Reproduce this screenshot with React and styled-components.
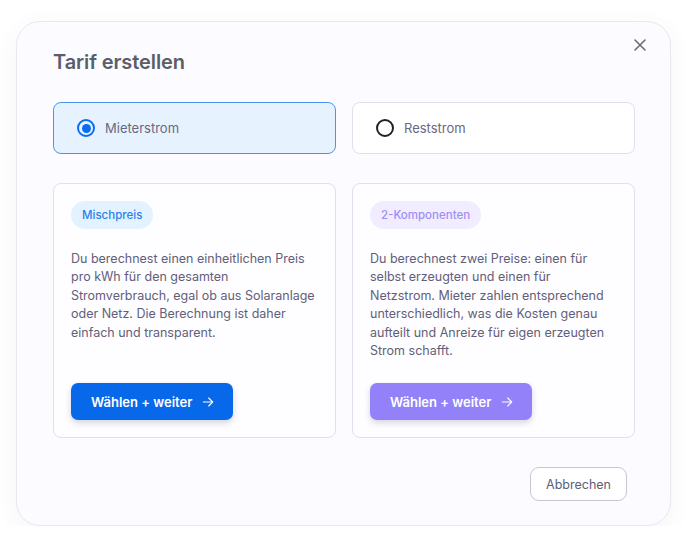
import React, { useState } from "react";
import styled, { createGlobalStyle } from "styled-components";

const Global = createGlobalStyle`
  html, body { margin: 0; padding: 0; background: #ffffff; }
  body { font-family: Inter, "Noto Sans", Arial, sans-serif; -webkit-font-smoothing: antialiased; }
  * { box-sizing: border-box; }
`;

const Page = styled.div`
  padding: 21px 16px 0 16px;
  width: 687px;
`;

const Dialog = styled.div`
  position: relative;
  width: 655px;
  height: 505px;
  background: #fcfbff;
  border: 1px solid #e9e7f0;
  border-radius: 24px;
  box-shadow: 0 6px 24px rgba(90, 80, 140, 0.06);
  padding: 28px 35px 24px 36px;
  display: flex;
  flex-direction: column;
`;

const Close = styled.button`
  position: absolute;
  top: 14px;
  right: 21px;
  width: 18px;
  height: 18px;
  border: none;
  background: transparent;
  padding: 0;
  display: flex;
  align-items: center;
  justify-content: center;
  cursor: pointer;
`;

const Title = styled.h2`
  margin: 0;
  font-size: 20px;
  line-height: 24px;
  font-weight: 600;
  color: #5a5e69;
  letter-spacing: -0.1px;
`;

const Row = styled.div`
  display: grid;
  grid-template-columns: 1fr 1fr;
  gap: 16px;
`;

const RadioRow = styled(Row)`
  margin-top: 28px;
`;

const RadioCard = styled.label`
  height: 52px;
  border-radius: 8px;
  border: 1px solid ${(p) => (p.$active ? "#4a94f0" : "#dfe0ee")};
  background: ${(p) => (p.$active ? "#e6f3ff" : "#ffffff")};
  display: flex;
  align-items: center;
  gap: 10px;
  padding-left: 23px;
  cursor: pointer;
  font-size: 13px;
  color: #6a6780;
`;

const RadioDot = styled.span`
  width: 18px;
  height: 18px;
  border-radius: 50%;
  border: 2px solid ${(p) => (p.$active ? "#0a6cf0" : "#222226")};
  display: flex;
  align-items: center;
  justify-content: center;
  &::after {
    content: "";
    width: 9px;
    height: 9px;
    border-radius: 50%;
    background: ${(p) => (p.$active ? "#0a6cf0" : "transparent")};
  }
`;

const CardRow = styled(Row)`
  margin-top: 29px;
`;

const Card = styled.div`
  height: 255px;
  border: 1px solid #dfe0ee;
  border-radius: 8px;
  background: #fefdff;
  padding: 17px 17px 17px 17px;
  display: flex;
  flex-direction: column;
  align-items: flex-start;
`;

const Badge = styled.span`
  height: 28px;
  border-radius: 14px;
  padding: 0 11px;
  display: inline-flex;
  align-items: center;
  font-size: 11.5px;
  font-weight: 500;
  color: ${(p) => p.$color};
  background: ${(p) => p.$bg};
`;

const Desc = styled.p`
  margin: 21px 0 0 0;
  font-size: 12.5px;
  line-height: 18.4px;
  color: #625f7a;
`;

const Choose = styled.button`
  margin-top: auto;
  height: 37px;
  padding: 0 17px 0 20px;
  border: none;
  border-radius: 7px;
  background: ${(p) => p.$bg};
  color: #ffffff;
  font-family: inherit;
  font-size: 13px;
  font-weight: 600;
  display: inline-flex;
  align-items: center;
  gap: 8px;
  box-shadow: 0 3px 6px rgba(40, 40, 90, 0.18);
  cursor: pointer;
`;

const Footer = styled.div`
  margin-top: auto;
  display: flex;
  justify-content: flex-end;
  padding-right: 8px;
`;

const Cancel = styled.button`
  height: 34px;
  padding: 0 15px;
  border: 1px solid #c8c6d3;
  border-radius: 9px;
  background: #ffffff;
  color: #5a607a;
  font-family: inherit;
  font-size: 12.5px;
  cursor: pointer;
`;

const Arrow = () => (
  <svg width="16" height="16" viewBox="0 0 24 24" fill="none" stroke="currentColor" strokeWidth="1.6" strokeLinecap="round" strokeLinejoin="round">
    <path d="M5 12h14" />
    <path d="M13 6l6 6-6 6" />
  </svg>
);

export default function App() {
  const [type, setType] = useState("mieter");
  return (
    <Page>
      <Global />
      <Dialog>
        <Close aria-label="Schließen">
          <svg width="12" height="12" viewBox="0 0 12 12" stroke="#6c6c74" strokeWidth="1.6" strokeLinecap="round">
            <path d="M1 1l10 10M11 1L1 11" />
          </svg>
        </Close>
        <Title>Tarif erstellen</Title>
        <RadioRow>
          <RadioCard $active={type === "mieter"} onClick={() => setType("mieter")}>
            <RadioDot $active={type === "mieter"} />
            Mieterstrom
          </RadioCard>
          <RadioCard $active={type === "rest"} onClick={() => setType("rest")}>
            <RadioDot $active={type === "rest"} />
            Reststrom
          </RadioCard>
        </RadioRow>
        <CardRow>
          <Card>
            <Badge $color="#2d80ec" $bg="#e2f2ff">Mischpreis</Badge>
            <Desc>
              Du berechnest einen einheitlichen Preis pro kWh für den gesamten Stromverbrauch, egal ob aus Solaranlage oder Netz. Die Berechnung ist daher einfach und transparent.
            </Desc>
            <Choose $bg="#0768ea">
              Wählen + weiter <Arrow />
            </Choose>
          </Card>
          <Card>
            <Badge $color="#a08ef4" $bg="#f1edff">2-Komponenten</Badge>
            <Desc>
              Du berechnest zwei Preise: einen für selbst erzeugten und einen für Netzstrom. Mieter zahlen entsprechend unterschiedlich, was die Kosten genau aufteilt und Anreize für eigen erzeugten Strom schafft.
            </Desc>
            <Choose $bg="#9381fa">
              Wählen + weiter <Arrow />
            </Choose>
          </Card>
        </CardRow>
        <Footer>
          <Cancel>Abbrechen</Cancel>
        </Footer>
      </Dialog>
    </Page>
  );
}
